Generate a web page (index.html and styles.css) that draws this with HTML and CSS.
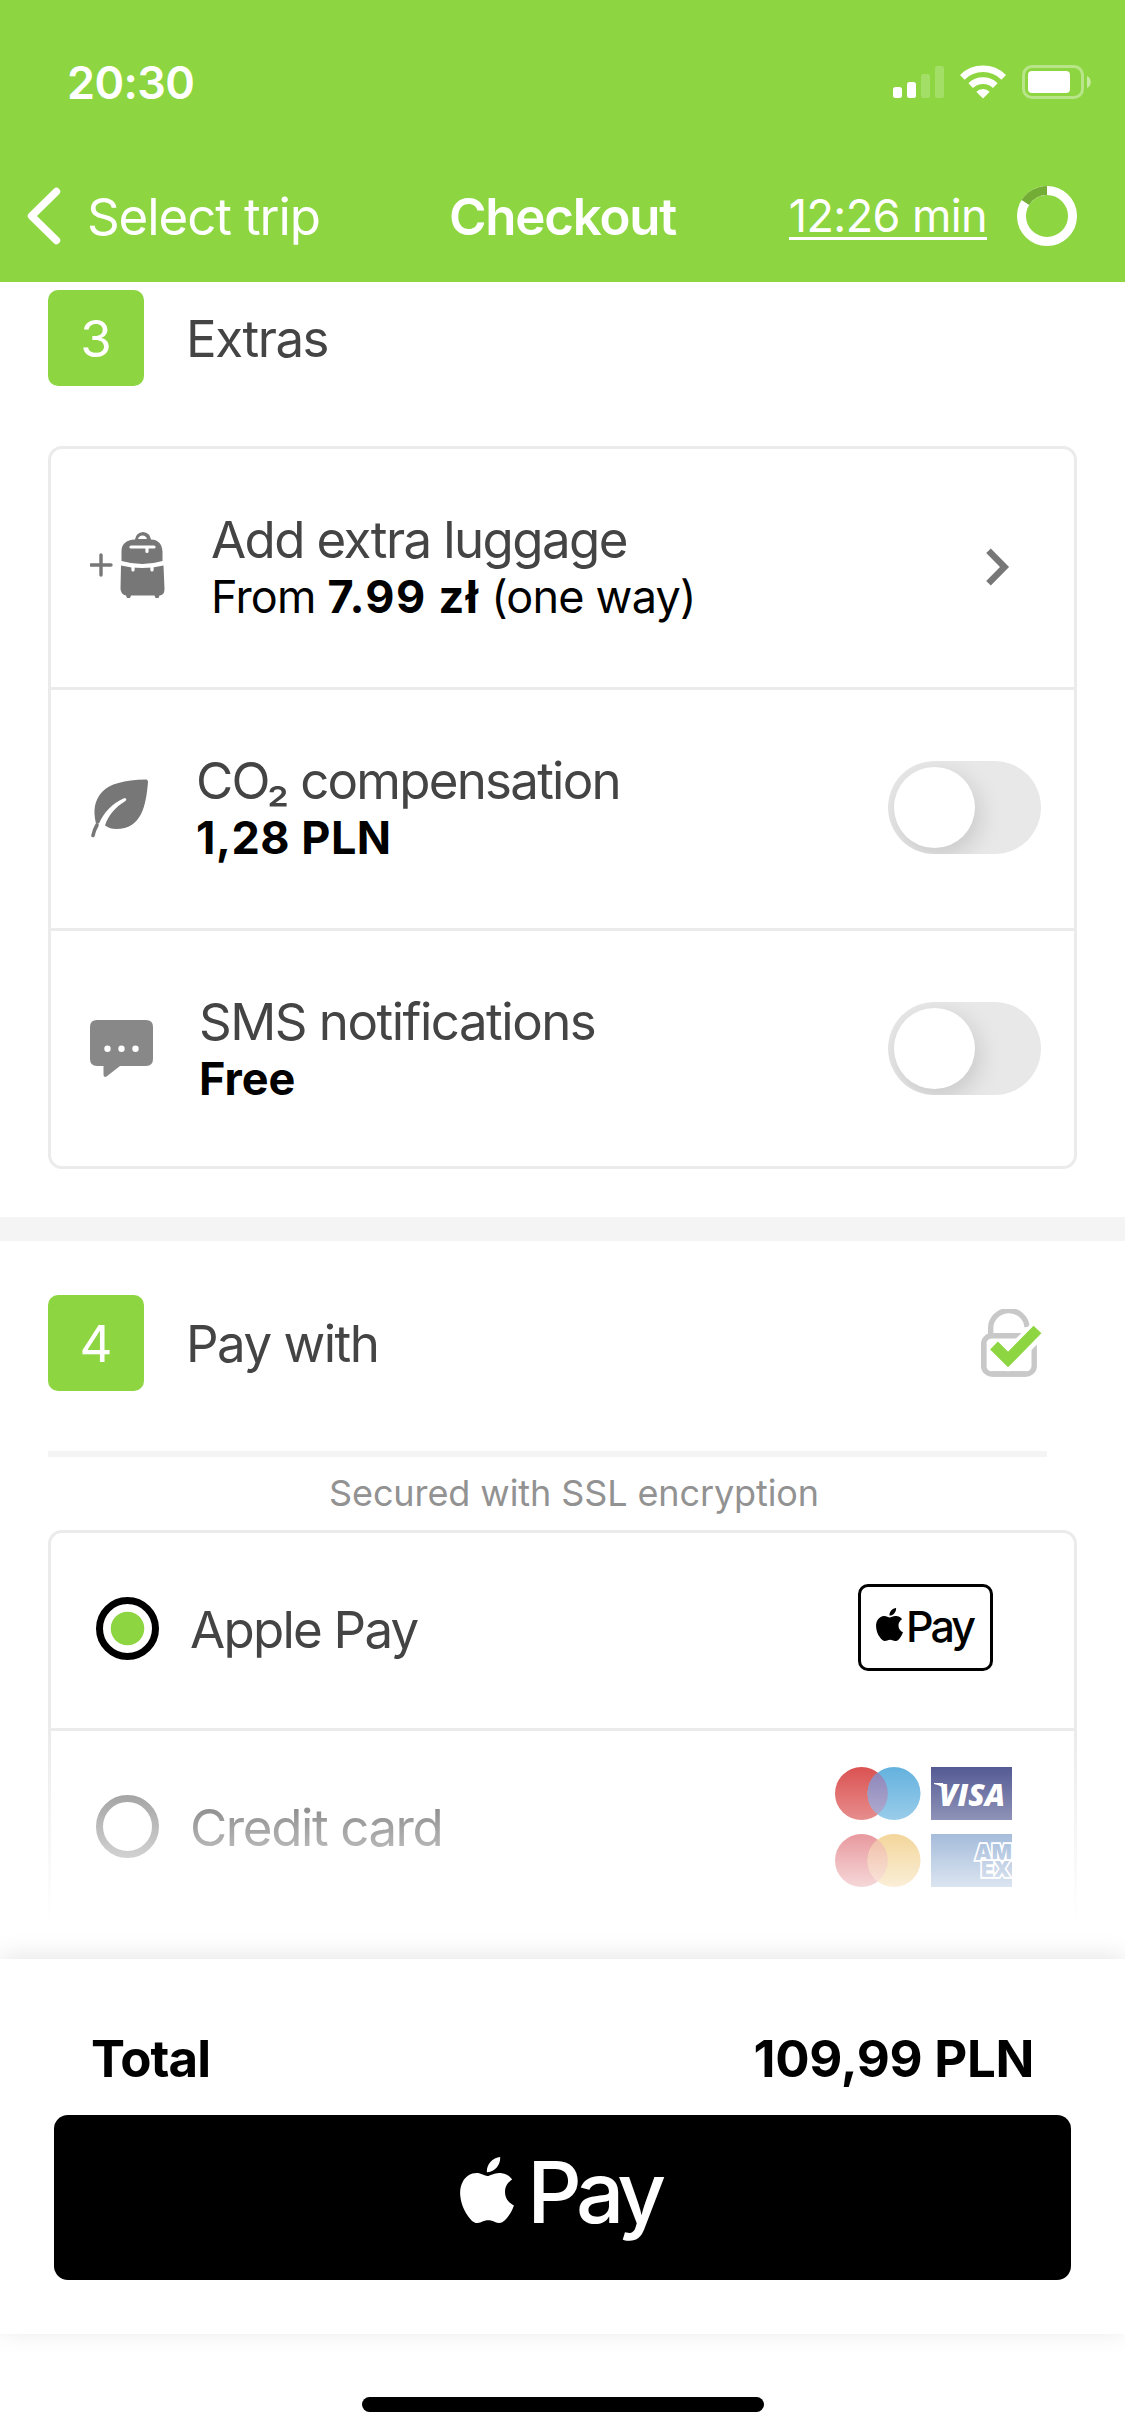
FILE: index.html
```html
<!DOCTYPE html>
<html lang="en">
<head>
<meta charset="utf-8">
<title>Checkout</title>
<link rel="stylesheet" href="styles.css">
</head>
<body>
<svg class="defs" width="0" height="0" aria-hidden="true">
  <symbol id="apple" viewBox="2.2 0 19.6 24">
    <path d="M12.152 6.896c-.948 0-2.415-1.078-3.96-1.04-2.04.027-3.91 1.183-4.961 3.014-2.117 3.675-.546 9.103 1.519 12.09 1.013 1.454 2.208 3.09 3.792 3.039 1.52-.065 2.09-.987 3.935-.987 1.831 0 2.35.987 3.96.948 1.637-.026 2.676-1.48 3.676-2.948 1.156-1.688 1.636-3.325 1.662-3.415-.039-.013-3.182-1.221-3.22-4.857-.026-3.04 2.48-4.494 2.597-4.559-1.429-2.09-3.623-2.324-4.39-2.376-2-.156-3.675 1.09-4.61 1.09zM15.53 3.83c.843-1.012 1.4-2.427 1.245-3.83-1.207.052-2.662.805-3.532 1.818-.78.896-1.454 2.338-1.273 3.714 1.338.104 2.715-.688 3.559-1.701"/>
  </symbol>
</svg>
<div class="phone">
  <header class="header">
    <div class="status">
      <span class="clock">20:30</span>
      <svg class="signal" width="52" height="34" viewBox="0 0 52 34" fill="#fff">
        <rect x="0" y="22" width="9" height="11" rx="2.5"/>
        <rect x="14" y="17" width="9" height="16" rx="2.5"/>
        <rect x="28" y="9" width="9" height="24" rx="2.5" opacity=".2"/>
        <rect x="42" y="1" width="9" height="32" rx="2.5" opacity=".2"/>
      </svg>
      <svg class="wifi" width="46" height="34" viewBox="0 0 46 34" fill="none" stroke="#fff" stroke-width="6.6">
        <path d="M2.3 12.3a29.5 29.5 0 0 1 41.4 0"/>
        <path d="M10.7 20.6a17.6 17.6 0 0 1 24.6 0"/>
        <path d="M23 33.5l-6.7-6.8a9.6 9.6 0 0 1 13.4 0z" fill="#fff" stroke="none"/>
      </svg>
      <svg class="battery" width="70" height="34" viewBox="0 0 70 34">
        <rect x="1.5" y="1.5" width="59" height="31" rx="8.5" fill="none" stroke="#fff" stroke-opacity=".38" stroke-width="3"/>
        <rect x="6" y="6" width="42" height="22" rx="4" fill="#fff"/>
        <path d="M65 11c5 2 5 10 0 12z" fill="#fff" fill-opacity=".5"/>
      </svg>
    </div>
    <nav class="nav">
      <a class="back">
        <svg width="34" height="58" viewBox="0 0 34 58" fill="none" stroke="#fff" stroke-width="7.4" stroke-linecap="round" stroke-linejoin="round"><path d="M29.5 4.5L4.5 29l25 24.5"/></svg>
        <span class="back-label">Select trip</span>
      </a>
      <h1 class="title">Checkout</h1>
      <div class="timer">
        <span class="time-left">12:26 min</span>
        <svg width="60" height="60" viewBox="0 0 60 60" fill="none" stroke-width="9">
          <circle cx="30" cy="30" r="25.5" stroke="#fff"/>
          <path d="M8.4 16.5A25.5 25.5 0 0 1 30 4.5" stroke="#73ad35"/>
        </svg>
      </div>
    </nav>
  </header>

  <main class="content">
    <section class="extras">
      <div class="section-head">
        <span class="step">3</span>
        <h2 class="section-title">Extras</h2>
      </div>
      <div class="card">
        <div class="row">
          <svg class="icon-bag" width="75" height="66" viewBox="0 0 75 66">
            <path d="M11 23v20M1 33h20" stroke="#777" stroke-width="3.4" stroke-linecap="round"/>
            <path d="M45 7.500q1-7 8-7.500q7 .5 8 7.500c8 .5 11 5 11.500 12V29q-20 6-41 0V19.500C31.500 12 36 8 45 7.500zM48 7h9q-1-3.500-4.500-3.500T48 7z" fill="#777" fill-rule="evenodd"/>
            <path d="M31 33.500q21 5 42.500 0L74.500 57q0 6-5 6.500l-1 2.500h-3l-1-2.500H41L40 66h-3l-1-2.500q-5-1-5.500-6.500z" fill="#777"/>
            <path d="M41 15h23M57 15v4.500M43 34v4M62 34v4" stroke="#fff" stroke-width="3.200" stroke-linecap="round" fill="none"/>
          </svg>
          <div class="row-text">
            <div class="row-title t-luggage">Add extra luggage</div>
            <div class="row-sub s-luggage">From <b>7.99 zł</b> (one way)</div>
          </div>
          <svg class="chevron" width="24" height="38" viewBox="0 0 24 38" fill="none" stroke="#777" stroke-width="6.500"><path d="M2.500 2.800L18.500 19 2.500 35.200"/></svg>
        </div>
        <div class="row">
          <svg class="icon-leaf" width="60" height="60" viewBox="0 0 60 60">
            <path d="M56 .5q2-.3 2 2.500C56 26 52 50 26 50q-6 0-11-3.500C18 37 25 28 35.500 22q2-2.500-1-3C22 24 13 35 9 44.500H6Q1 25 12 13T56 .5z" fill="#777"/>
            <path d="M7 46q-3 5-4 10.500" stroke="#777" stroke-width="3.600" stroke-linecap="round" fill="none"/>
          </svg>
          <div class="row-text">
            <div class="row-title t-co2">CO₂ compensation</div>
            <div class="row-sub"><b>1,28 PLN</b></div>
          </div>
          <span class="toggle"><span class="knob"></span></span>
        </div>
        <div class="row row-last">
          <svg class="icon-sms" width="63" height="58" viewBox="0 0 63 58">
            <path d="M7 0h49q7 0 7 7v32q0 7-7 7H30L16.500 56.500q-3 1.500-3-2V46H7q-7 0-7-7V7q0-7 7-7z" fill="#888"/>
            <g fill="#fff"><circle cx="17.500" cy="28.700" r="3.200"/><circle cx="31.500" cy="28.700" r="3.200"/><circle cx="45.500" cy="28.700" r="3.200"/></g>
          </svg>
          <div class="row-text">
            <div class="row-title t-sms">SMS notifications</div>
            <div class="row-sub s-sms"><b>Free</b></div>
          </div>
          <span class="toggle"><span class="knob"></span></span>
        </div>
      </div>
    </section>

    <section class="payment">
      <div class="section-head">
        <span class="step">4</span>
        <h2 class="section-title">Pay with</h2>
        <svg class="lock" width="62" height="68" viewBox="0 0 62 68" fill="none">
          <path d="M9.700 26V20a18 17.300 0 0 1 36.300-2" stroke="#c8c8c8" stroke-width="5.400"/>
          <rect x="2.700" y="26.700" width="50.500" height="38.300" rx="8" stroke="#c8c8c8" stroke-width="5.400"/>
          <path d="M13 37l14 14 30.500-30.500" stroke="#fff" stroke-width="19"/>
          <path d="M2.700 35v22M11 65h34" stroke="#c8c8c8" stroke-width="5.400"/>
          <path d="M13 36.500l14 14 29.500-30" stroke="#8dd641" stroke-width="11"/>
        </svg>
      </div>
      <div class="rule"></div>
      <p class="ssl">Secured with SSL encryption</p>
      <div class="card methods">
        <div class="method">
          <span class="radio checked"></span>
          <span class="method-name">Apple Pay</span>
          <span class="apple-badge"><svg width="27" height="33"><use href="#apple"/></svg><span class="badge-pay">Pay</span></span>
        </div>
        <div class="method">
          <span class="radio"></span>
          <span class="method-name m-card">Credit card</span>
          <div class="brands">
            <svg width="86" height="53" viewBox="0 0 86 53"><circle cx="26.500" cy="26.500" r="26.500" fill="#d22a29"/><circle cx="59" cy="26.500" r="26.500" fill="#40a0d7"/><path d="M42.700 5.600a26.500 26.500 0 0 1 0 41.800a26.500 26.500 0 0 1 0-41.800z" fill="#6f66a8"/></svg>
            <svg width="81" height="53" viewBox="0 0 81 53"><rect width="81" height="53" fill="#2c347a"/><path d="M3 16h9l3 9q-4-7-12-8z" fill="#fff"/><text x="8" y="38.500" class="visa" textLength="66" lengthAdjust="spacingAndGlyphs">VISA</text></svg>
            <svg width="86" height="53" viewBox="0 0 86 53"><circle cx="26.500" cy="26.500" r="26.500" fill="#cc212b"/><circle cx="59" cy="26.500" r="26.500" fill="#e6a525"/><path d="M42.700 5.600a26.500 26.500 0 0 1 0 41.800a26.500 26.500 0 0 1 0-41.800z" fill="#de6f3a"/></svg>
            <svg width="81" height="53" viewBox="0 0 81 53"><rect width="81" height="53" fill="#3b6db0"/><text class="amex"><tspan x="44" y="25.500">AM</tspan><tspan x="50" y="43">EX</tspan></text></svg>
          </div>
        </div>
      </div>
    </section>
    <div class="fade"></div>
  </main>

  <footer class="footer">
    <div class="total">
      <span class="total-label">Total</span>
      <span class="total-amount">109,99 PLN</span>
    </div>
    <button class="pay-button"><svg width="54" height="66" fill="#fff"><use href="#apple"/></svg><span class="button-pay">Pay</span></button>
  </footer>
  <div class="home"><span class="home-bar"></span></div>
</div>
</body>
</html>
```
FILE: styles.css
```css
* { box-sizing: border-box; }
body { margin: 0; background: #fff; font-family: Inter, "Liberation Sans", sans-serif; }
.defs { position: absolute; }
svg { display: block; flex: none; }
h1, h2, p { margin: 0; font-weight: 400; }
span, h1, h2, div { white-space: nowrap; }

.phone { width: 1125px; height: 2436px; display: flex; flex-direction: column; overflow: hidden; background: #fff; }

.header { height: 282px; flex: none; background: #8dd641; color: #fff; padding-top: 50px; }
.status { height: 64px; display: flex; align-items: center; padding: 0 33px 0 67px; }
.clock { font-size: 45px; font-weight: 600; margin-right: auto; letter-spacing: -.6px; }
.signal { margin-right: 15px; }
.wifi { margin-right: 16px; }
.nav { height: 100px; margin-top: 52px; display: grid; grid-template-columns: 1fr auto 1fr; align-items: center; padding: 0 27px; }
.back { display: flex; align-items: center; gap: 26px; }
.back-label, .title { font-size: 51px; letter-spacing: -1.1px; }
.title { font-weight: 600; letter-spacing: -1.2px; }
.timer { display: flex; align-items: center; justify-content: flex-end; gap: 30px; margin-right: 21px; }
.time-left { height: 48px; font-size: 45px; font-weight: 400; line-height: 48px; letter-spacing: -.6px; border-bottom: 3px solid #fff; }

.content { height: 1677px; flex: none; position: relative; overflow: hidden; }
.extras { height: 959px; padding: 8px 48px 0; border-bottom: 24px solid #f4f4f4; }
.section-head { display: flex; align-items: center; height: 96px; color: #444; }
.step { width: 96px; height: 96px; border-radius: 10px; background: #8dd641; color: #fff; font-size: 51px; font-weight: 400; line-height: 98px; text-align: center; }
.section-title { margin-left: 42px; font-size: 51px; letter-spacing: -1.5px; }
.card { border: 3px solid #ebebeb; border-radius: 14px; }
.extras .card { margin-top: 60px; }
.row { height: 241px; display: flex; align-items: center; border-bottom: 3px solid #ebebeb; padding: 0 33px 0 39px; }
.row-last { height: 235px; border-bottom: 0; }
.row-text { flex: 1; line-height: 57px; }
.row-last .row-text { padding-top: 3px; }
.row-title { font-size: 51px; color: #444; }
.t-luggage { letter-spacing: -1.6px; }
.t-co2 { letter-spacing: -1.75px; }
.t-sms { letter-spacing: -1.5px; }
.row-sub { font-size: 45px; color: #000; }
.row-sub b { font-weight: 700; letter-spacing: .5px; }
.s-luggage { letter-spacing: -.8px; }
.s-luggage b { letter-spacing: 1.4px; }
.s-sms b { letter-spacing: 0; }
.icon-bag { margin-right: 46px; margin-top: -6px; }
.icon-leaf { margin-right: 46px; }
.icon-sms { margin-right: 46px; }
.chevron { margin-right: 31px; margin-top: -3px; }
.toggle { width: 153px; height: 93px; padding: 6px; border-radius: 47px; background: #e8e8e8; overflow: hidden; margin-bottom: 3px; flex: none; }
.row-last .toggle { margin-bottom: 0; }
.knob { display: block; width: 81px; height: 81px; border-radius: 50%; background: #fff; box-shadow: 4px 8px 24px rgba(0,0,0,.14); }

.payment { padding: 54px 48px 0; }
.lock { margin: -1px 34px 0 auto; }
.rule { height: 6px; width: 999px; margin-top: 60px; background: #f4f4f4; }
.ssl { height: 73px; line-height: 73px; font-size: 36px; letter-spacing: -.1px; color: #929292; text-align: center; padding-left: 23px; }
.methods { height: 500px; }
.method { height: 198px; display: flex; align-items: center; padding: 0 45px; border-bottom: 3px solid #ebebeb; }
.radio { width: 63px; height: 63px; margin-top: -4px; border: 7px solid #777; border-radius: 50%; flex: none; }
.radio.checked { border-color: #000; background: radial-gradient(circle, #8dd641 16.300px, #fff 17.200px); }
.method-name { margin: -2px auto 0 31px; font-size: 51px; color: #444; letter-spacing: -1.75px; }
.m-card { letter-spacing: -1.4px; }
.apple-badge { width: 135px; height: 87px; margin-right: 36px; margin-top: -6px; border: 3px solid #000; border-radius: 10px; display: flex; align-items: center; padding: 0 0 6px 15px; gap: 3px; }
.badge-pay { font-size: 43px; font-weight: 500; line-height: 60px; margin-top: 3px; letter-spacing: -2.9px; }
.brands { display: grid; grid-template-columns: 86px 81px; gap: 14px 10px; margin: -4px 17px 0 0; }
.visa { font: italic 800 30px "Open Sans", sans-serif; fill: #fff; }
.amex { font: 900 21px Inter, sans-serif; fill: #3b6db0; stroke: #fff; stroke-width: 3.400px; paint-order: stroke; }
.fade { position: absolute; left: 0; right: 0; bottom: 0; height: 228px; background: linear-gradient(rgba(255,255,255,0), #fff 190px); }

.footer { height: 375px; flex: none; position: relative; background: #fff; padding: 76px 54px 0; box-shadow: 0 -3px 24px rgba(0,0,0,.1); }
.total { height: 50px; line-height: 48px; display: flex; justify-content: space-between; padding: 0 37px; font-size: 51px; font-weight: 700; }
.total-label { letter-spacing: -.9px; }
.total-amount { letter-spacing: -.3px; }
.pay-button { width: 100%; height: 165px; margin-top: 30px; padding: 0 4px 0 0; border: 0; border-radius: 14px; background: #000; color: #fff; font-family: inherit; display: flex; align-items: center; justify-content: center; gap: 13px; }
.pay-button svg { margin-top: -16px; }
.button-pay { font-size: 85px; font-weight: 500; margin-top: -10px; line-height: 100px; letter-spacing: -5.500px; }
.home { height: 102px; display: flex; justify-content: center; padding-top: 63px; }
.home-bar { width: 402px; height: 15px; border-radius: 8px; background: #000; }
```
